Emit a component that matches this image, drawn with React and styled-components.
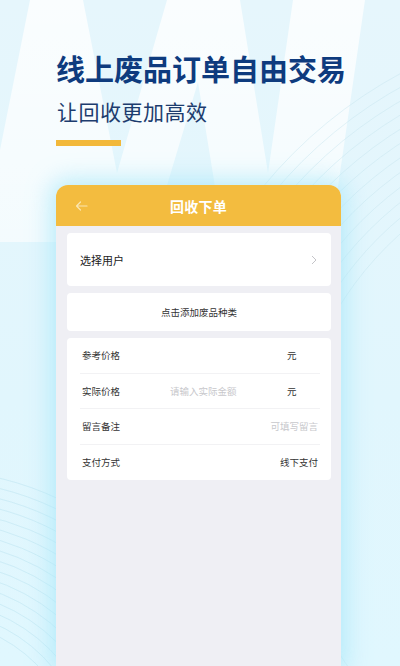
import React from "react";
import styled, { createGlobalStyle } from "styled-components";

const GlobalStyle = createGlobalStyle`
  html, body {
    margin: 0;
    padding: 0;
    background: #e2f6fd;
  }
  * {
    box-sizing: border-box;
  }
`;

const Page = styled.div`
  position: relative;
  width: 400px;
  height: 666px;
  overflow: hidden;
  background: linear-gradient(180deg, #e6f6fc 0%, #e1f6fd 60%, #e0f7fe 100%);
  font-family: "Noto Sans CJK SC", "Noto Sans", sans-serif;
`;

const Backdrop = styled.svg`
  position: absolute;
  top: 0;
  left: 0;
  width: 400px;
  height: 666px;
  z-index: 0;
`;

const Content = styled.div`
  position: relative;
  z-index: 1;
  display: flex;
  flex-direction: column;
  padding: 50px 0 0 56px;
`;

const Title = styled.h1`
  margin: 0;
  font-size: 29px;
  line-height: 36px;
  font-weight: 700;
  color: #0e3b7e;
  letter-spacing: 0;
`;

const Subtitle = styled.h2`
  margin: 11px 0 0 1px;
  font-size: 21px;
  line-height: 28px;
  font-weight: 400;
  color: #1d3c6e;
  letter-spacing: 0.5px;
`;

const Accent = styled.div`
  width: 65px;
  height: 6px;
  margin-top: 15px;
  background: #f2b83a;
`;

const Phone = styled.div`
  width: 285px;
  height: 481px;
  margin-top: 39px;
  border-radius: 12px 12px 0 0;
  background: #efeff4;
  box-shadow: 0 0 22px 6px rgba(170, 232, 250, 0.75);
  overflow: hidden;
  display: flex;
  flex-direction: column;
`;

const Header = styled.div`
  position: relative;
  height: 41px;
  background: #f3bc3f;
  display: flex;
  align-items: center;
  justify-content: center;
`;

const BackButton = styled.div`
  position: absolute;
  left: 19px;
  top: 16px;
  display: flex;
`;

const HeaderTitle = styled.div`
  color: #fff;
  font-size: 14px;
  font-weight: 700;
  letter-spacing: 0.3px;
`;

const Body = styled.div`
  display: flex;
  flex-direction: column;
  gap: 7px;
  padding: 7px 10px 0 11px;
`;

const Card = styled.div`
  background: #fff;
  border-radius: 4px;
  display: flex;
  flex-direction: column;
  padding: ${(p) => p.$pad || "0"};
  height: ${(p) => p.$height || "auto"};
  justify-content: center;
`;

const UserRow = styled.div`
  display: flex;
  align-items: center;
  justify-content: space-between;
  padding: 0 14px 0 13px;
  font-size: 11px;
  color: #222;
`;

const AddText = styled.div`
  text-align: center;
  font-size: 9.5px;
  color: #333;
`;

const FieldRow = styled.div`
  display: flex;
  align-items: center;
  height: 35.5px;
  font-size: 9.5px;
  color: #333;
  border-bottom: ${(p) => (p.$last ? "none" : "1px solid #f2f2f4")};
`;

const Label = styled.div`
  width: 90px;
  padding-left: 2px;
`;

const Input = styled.div`
  flex: 1;
  color: ${(p) => (p.$placeholder ? "#c8c8cc" : "#333")};
  text-align: ${(p) => (p.$right ? "right" : "left")};
  padding-right: ${(p) => (p.$right ? "2px" : "0")};
`;

const Unit = styled.div`
  width: 33px;
`;

const fields = [
  { label: "参考价格", value: "", unit: "元" },
  { label: "实际价格", value: "请输入实际金额", placeholder: true, unit: "元" },
  { label: "留言备注", value: "可填写留言", placeholder: true, right: true },
  { label: "支付方式", value: "线下支付", right: true },
];

const arcsTop = Array.from({ length: 12 }, (_, i) => 330 + i * 12);
const arcsBottom = Array.from({ length: 16 }, (_, i) => 150 + i * 10);

const App = () => {
  return (
    <>
      <GlobalStyle />
      <Page>
        <Backdrop viewBox="0 0 400 666">
          <defs>
            <linearGradient id="wfade" x1="0" y1="0" x2="0" y2="1">
              <stop offset="0" stopColor="#ffffff" stopOpacity="0.8" />
              <stop offset="1" stopColor="#ffffff" stopOpacity="0.6" />
            </linearGradient>
          </defs>
          <polygon
            points="30,0 0,150 0,242 78,242 150,242 198,82 224,242 330,242 365,0 293,0 268,173 240,0 167,0 117,173 83,0"
            fill="url(#wfade)"
          />
          <g fill="none" stroke="#c4e4ef" strokeWidth="0.6" opacity="0.75">
            {arcsTop.map((r) => (
              <circle key={r} cx="620" cy="480" r={r} />
            ))}
          </g>
          <g fill="none" stroke="#b9e3f0" strokeWidth="0.6" opacity="0.8">
            {arcsBottom.map((r) => (
              <circle key={r} cx="-70" cy="770" r={r} />
            ))}
          </g>
        </Backdrop>
        <Content>
          <Title>线上废品订单自由交易</Title>
          <Subtitle>让回收更加高效</Subtitle>
          <Accent />
          <Phone>
            <Header>
              <BackButton>
                <svg width="13" height="10" viewBox="0 0 13 10">
                  <path
                    d="M12 5H1.5M5.5 1L1.5 5L5.5 9"
                    fill="none"
                    stroke="#fbe6b0"
                    strokeWidth="1.2"
                    strokeLinecap="round"
                    strokeLinejoin="round"
                  />
                </svg>
              </BackButton>
              <HeaderTitle>回收下单</HeaderTitle>
            </Header>
            <Body>
              <Card $height="53px">
                <UserRow>
                  <span>选择用户</span>
                  <svg width="6" height="10" viewBox="0 0 6 10">
                    <path
                      d="M1 1L5 5L1 9"
                      fill="none"
                      stroke="#c4c4c8"
                      strokeWidth="1"
                    />
                  </svg>
                </UserRow>
              </Card>
              <Card $height="38px">
                <AddText>点击添加废品种类</AddText>
              </Card>
              <Card $pad="0 11px 0 13px">
                {fields.map((f, i) => (
                  <FieldRow key={f.label} $last={i === fields.length - 1}>
                    <Label>{f.label}</Label>
                    <Input $placeholder={f.placeholder} $right={f.right}>
                      {f.value}
                    </Input>
                    {f.unit && <Unit>{f.unit}</Unit>}
                  </FieldRow>
                ))}
              </Card>
            </Body>
          </Phone>
        </Content>
      </Page>
    </>
  );
};

export default App;
